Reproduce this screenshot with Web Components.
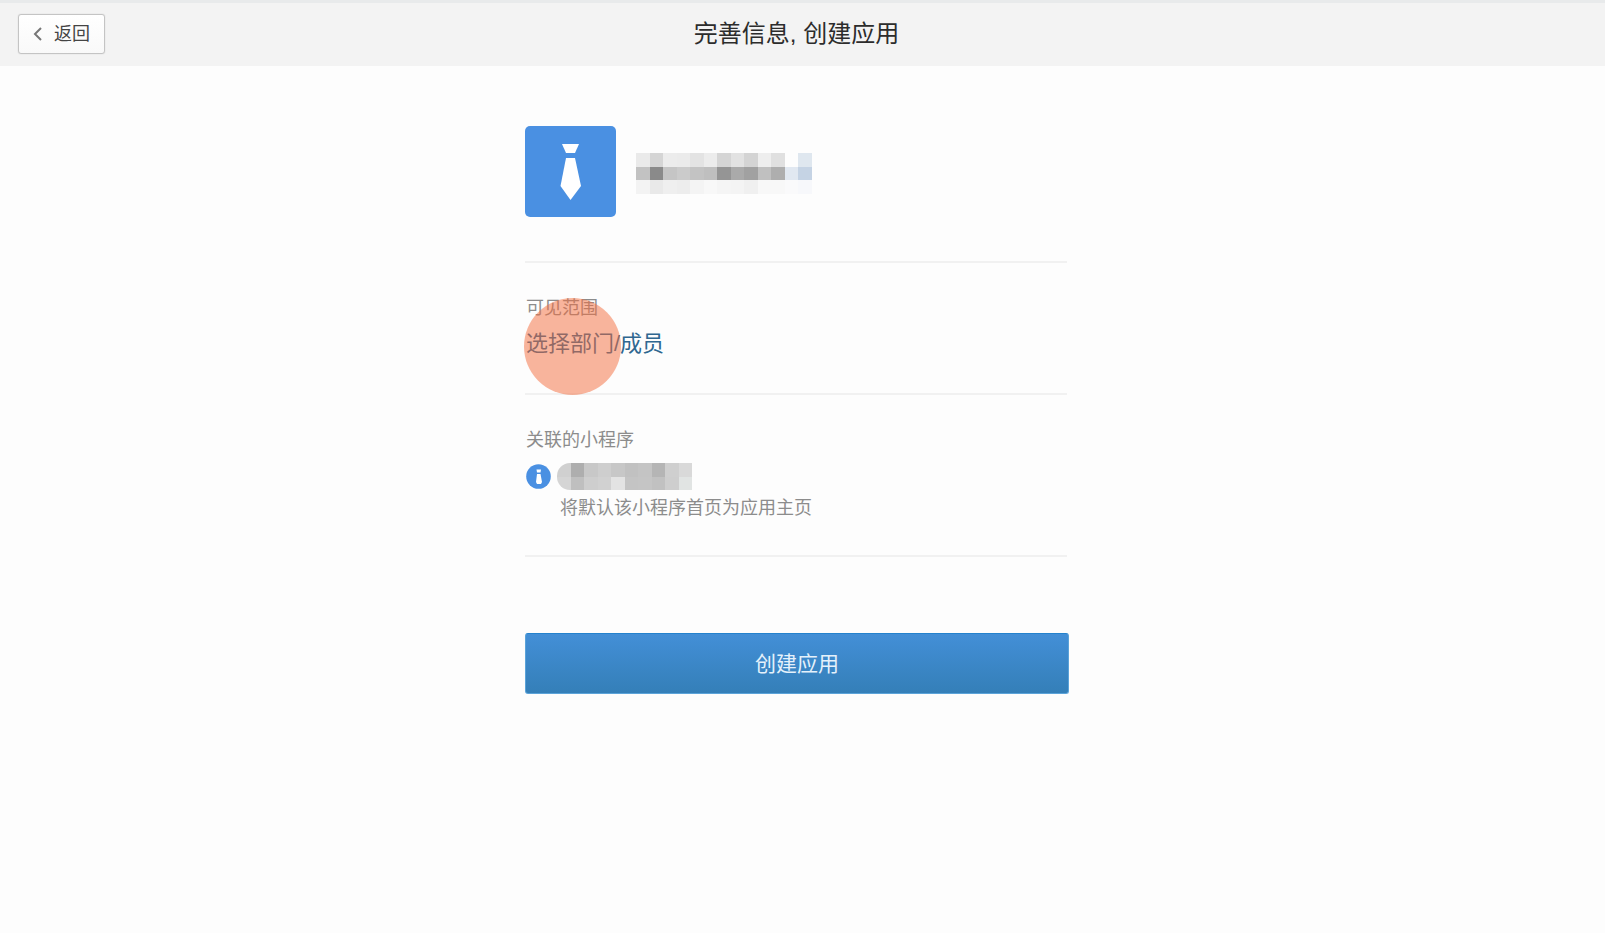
<!DOCTYPE html>
<html lang="zh-CN">
<head>
<meta charset="utf-8">
<meta name="viewport" content="width=device-width, initial-scale=1">
<title>完善信息, 创建应用</title>
<style>
  body {
    margin: 0;
    background: #fdfdfd;
    color: #333;
    font-family: "Liberation Sans", "Noto Sans CJK SC", sans-serif;
  }
</style>
</head>
<body>
<create-app-page></create-app-page>

<script>
  const define = (name, markup) => {
    const template = document.createElement('template');
    template.innerHTML = markup;
    customElements.define(name, class extends HTMLElement {
      constructor() {
        super();
        this.attachShadow({ mode: 'open' }).append(template.content.cloneNode(true));
      }
    });
  };

  /* Top bar: back button on the left, centred title */
  define('page-header', `
    <style>
      :host {
        display: grid;
        grid-template-columns: 1fr auto 1fr;
        align-items: center;
        box-sizing: border-box;
        height: 66px;
        padding: 0 30px 1px 18px;
        border-top: 3px solid #e8eaeb;
        background: #f3f3f3;
      }
      button {
        display: flex;
        align-items: center;
        justify-content: center;
        justify-self: start;
        gap: 12px;
        width: 87px;
        height: 40px;
        padding: 0;
        border: 1px solid #c4c4c4;
        border-radius: 3px;
        background: linear-gradient(#fff, #f9f9f9);
        box-shadow: 0 0 1px #bbb;
        color: #444;
        font: 18px/24px "Liberation Sans", "Noto Sans CJK SC", sans-serif;
      }
      h1 {
        margin: 0;
        font-size: 24px;
        font-weight: 400;
        line-height: 32px;
        color: #2c2c2c;
        white-space: nowrap;
      }
    </style>
    <button type="button">
      <svg width="9" height="14" viewBox="0 0 9 14" fill="none" stroke="#777" stroke-width="2" aria-hidden="true"><path d="M8 1 2 7l6 6"/></svg>
      <slot name="back"></slot>
    </button>
    <h1><slot></slot></h1>
  `);

  /* Application logo with its name */
  define('app-identity', `
    <style>
      :host { display: flex; align-items: center; gap: 20px; }
      .logo {
        display: flex;
        align-items: center;
        justify-content: center;
        width: 91px;
        height: 91px;
        border-radius: 5px;
        background: #4a90e2;
      }
      svg { display: block; }
    </style>
    <div class="logo">
      <svg width="22" height="58" viewBox="0 0 22 58" fill="#fff" aria-hidden="true">
        <path d="M2 1h17l-4 9H6z"/><path d="M6 15h9l6 28-10.500 14L.500 43z"/>
      </svg>
    </div>
    <slot></slot>
  `);

  /* Ruled block with an optional caption */
  define('form-section', `
    <style>
      :host {
        display: flex;
        flex-direction: column;
        gap: 10px;
        position: relative;
        padding: 33px 0 35px;
        margin-right: 2px;
        border-bottom: 2px solid #f1f1f1;
      }
      :host([plain]) { padding: 0 0 44px; }
      .caption { margin: 0; padding-left: 1px; font-size: 18px; font-weight: 400; line-height: 24px; color: #8c8c8c; }
      :host([plain]) .caption { display: none; }
    </style>
    <h2 class="caption"><slot name="caption"></slot></h2>
    <slot></slot>
  `);

  define('scope-picker', `
    <style>
      :host { display: block; padding-left: 1px; font-size: 22px; line-height: 28px; }
      a { color: #2f6790; text-decoration: none; }
    </style>
    <a href="#scope"><slot></slot></a>
  `);

  /* Round marker lying over the point to click */
  define('touch-marker', `
    <style>
      :host {
        position: absolute;
        top: 35px;
        left: -1px;
        width: 97px;
        height: 97px;
        border-radius: 50%;
        background: rgba(243, 107, 59, .5);
        pointer-events: none;
      }
    </style>
  `);

  define('mini-program', `
    <style>
      :host { display: grid; grid-template-columns: 25px 1fr; column-gap: 6px; row-gap: 6px; align-items: center; padding-left: 1px; }
      .name { display: flex; height: 28px; align-items: center; }
      .hint { grid-column: 2; margin: 0; padding-left: 3px; font-size: 18px; line-height: 24px; color: #8c8c8c; }
      svg { display: block; }
    </style>
    <svg width="25" height="25" viewBox="0 0 25 25" aria-hidden="true">
      <circle cx="12.500" cy="12.500" r="12.300" fill="#4a90e2"/>
      <path d="M10.500 5.500h4.500l-.5 3h-3.500zM11 10h3.500l1.500 8-1 2h-4l-1-2z" fill="#fff"/>
    </svg>
    <div class="name"><slot></slot></div>
    <p class="hint"><slot name="hint"></slot></p>
  `);

  define('primary-button', `
    <style>
      :host { display: block; }
      button {
        display: block;
        width: 100%;
        height: 61px;
        padding: 0;
        border: 1px solid #2e86cc;
        border-color: #2482cd #5ba3d9 #5ba3d9;
        border-radius: 3px;
        background: linear-gradient(#438fd7, #347fb8);
        color: #e4f1fb;
        font: 21px/28px "Liberation Sans", "Noto Sans CJK SC", sans-serif;
      }
    </style>
    <button type="button"><slot></slot></button>
  `);

  /* Name hidden behind a mosaic; rows are fills separated by spaces, "-" leaves a cell empty */
  customElements.define('masked-name', class extends HTMLElement {
    connectedCallback() {
      const cell = 27 / 2;
      const rows = this.getAttribute('rows').split('|').map(r => r.trim().split(/\s+/));
      const width = Math.round(rows[0].length * cell);
      const height = Math.round(rows.length * cell);
      const rects = rows.flatMap((row, y) => row.map((fill, x) => {
        if (fill === '-') return '';
        const left = Math.round(x * cell), top = Math.round(y * cell);
        const w = Math.round((x + 1) * cell) - left, h = Math.round((y + 1) * cell) - top;
        return `<rect x="${left}" y="${top}" width="${w}" height="${h}" fill="#${fill}"/>`;
      })).join('');
      const root = this.shadowRoot || this.attachShadow({ mode: 'open' });
      root.innerHTML = `
        <style>
          :host { display: block; overflow: hidden; }
          :host([rounded]) { border-radius: 13px 0 0 13px; }
          svg { display: block; }
        </style>
        <svg width="${width}" height="${height}" shape-rendering="crispEdges" aria-hidden="true">${rects}</svg>`;
    }
  });

  define('create-app-page', `
    <style>
      :host { display: block; }
      main { padding: 60px 11px 40px 0; }
      form { max-width: 544px; margin: 0 auto; }
      primary-button { margin-top: 76px; }
      app-identity masked-name { margin-top: 4px; }
    </style>
    <page-header><span slot="back">返回</span>完善信息, 创建应用</page-header>
    <main>
      <form>
        <form-section plain>
          <app-identity>
            <masked-name rows="
              eaeaea d5d5d5 ececec ebebeb e3e3e3 ececec d5d5d5 e2e2e2 d4d4d4 eeeeee e0e0e0 - dfe7ef |
              c2c2c2 8a8a8a c5c5c5 cbcbcb c3c3c3 bfbfbf 959595 aaaaaa a1a1a1 c0c0c0 aeaeae e1e8f1 c5d3e4 |
              f3f3f3 e9e9e9 efefef ededed f4f4f4 f8f8f8 f5f5f5 f4f4f4 f0f0f0 f8f8f8 f8f8f8 fafafb f7f8fb"></masked-name>
          </app-identity>
        </form-section>
        <form-section>
          <span slot="caption">可见范围</span>
          <scope-picker>选择部门/成员</scope-picker>
          <touch-marker></touch-marker>
        </form-section>
        <form-section>
          <span slot="caption">关联的小程序</span>
          <mini-program>
            <masked-name rounded rows="
              d0d0d0 aeaeae c8c8c8 cecece c7c7c7 c1c1c1 c4c4c4 b5b5b5 cfcfcf d9d9d9 |
              d5d5d5 bfbfbf cecece d1d1d1 e3e3e3 c4c4c4 c5c5c5 c1c1c1 cecece e1e4e3"></masked-name>
            <span slot="hint">将默认该小程序首页为应用主页</span>
          </mini-program>
        </form-section>
        <primary-button>创建应用</primary-button>
      </form>
    </main>
  `);
</script>
</body>
</html>
